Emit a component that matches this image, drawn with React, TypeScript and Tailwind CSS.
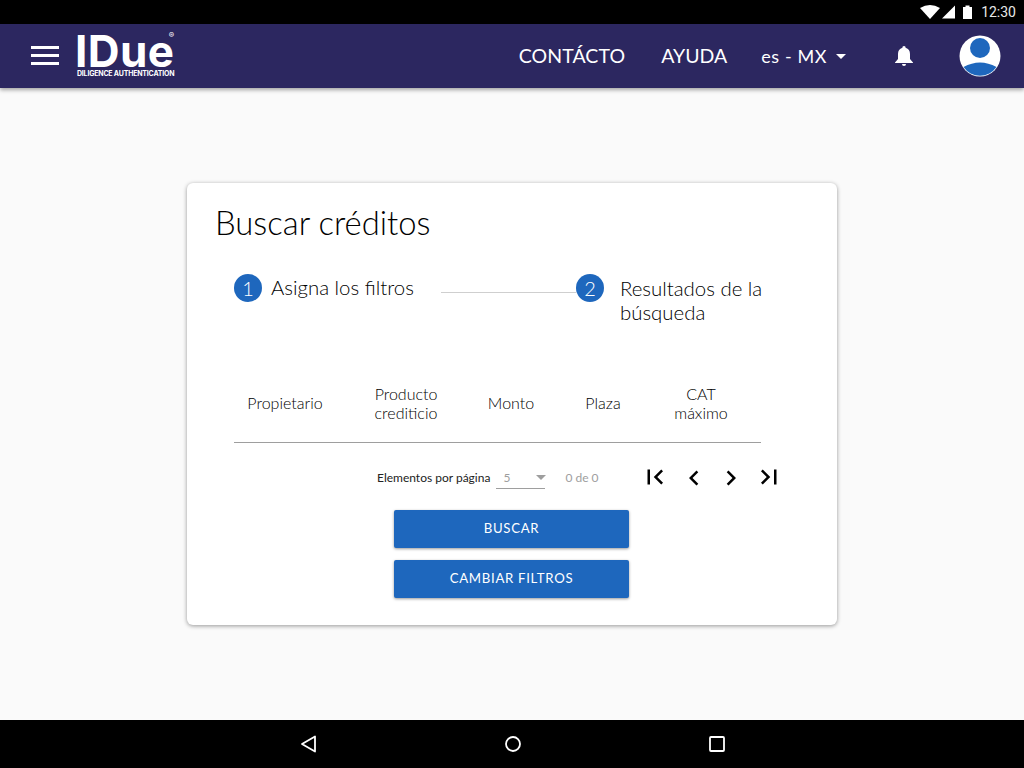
const font = { fontFamily: "Lato, sans-serif" };

function StatusBar() {
  return (
    <div className="h-6 bg-black flex items-center justify-end pr-[8px] shrink-0">
      <svg width="20" height="14" viewBox="0 0 20 14" className="mr-[1px]">
        <path d="M0 3 Q10 -3 20 3 L10 14 Z" fill="#fff" />
      </svg>
      <svg width="14" height="14" viewBox="0 0 14 14" className="mr-[8px]">
        <path d="M14 0.5 V13.5 H1 Z" fill="#fff" />
      </svg>
      <svg width="9" height="14" viewBox="0 0 9 14" className="mr-[9px]">
        <path d="M0 2 H2.5 V0.5 H6.5 V2 H9 V14 H0 Z" fill="#fff" />
      </svg>
      <span className="text-[14px] text-[#e8e8e8] font-['Roboto',sans-serif]">12:30</span>
    </div>
  );
}

function Header() {
  return (
    <header className="relative z-10 h-16 bg-[#2c2760] flex items-center text-white shadow-[0_2px_4px_rgba(0,0,0,0.35)] shrink-0">
      <div className="ml-[31px] w-7 flex flex-col gap-[5px] mt-[-1px]">
        <div className="h-[3px] bg-white" />
        <div className="h-[3px] bg-white" />
        <div className="h-[3px] bg-white" />
      </div>
      <div className="ml-[16px] w-[102px] relative h-[44px] font-['Inter',sans-serif]">
        <div className="text-[44px] leading-[38px] font-bold mt-[-2px] tracking-[0.4px]">IDue</div>
        <div className="absolute left-[2px] top-[37px] text-[7px] leading-[6px] font-bold whitespace-nowrap tracking-[-0.2px]">
          DILIGENCE AUTHENTICATION
        </div>
        <div className="absolute right-[3px] top-[-2px] text-[8px] leading-[6px]">®</div>
      </div>
      <nav className="ml-auto flex items-center" style={font}>
        <span className="text-[19.5px] tracking-[0.1px]">CONTÁCTO</span>
        <span className="ml-[36px] text-[19.5px]">AYUDA</span>
        <span className="ml-[34px] text-[18px] tracking-[0.6px]">es - MX</span>
        <div className="ml-[9px] w-0 h-0 border-x-[5px] border-x-transparent border-t-[5px] border-t-white" />
      </nav>
      <svg width="20" height="22" viewBox="0 0 20 22" className="ml-[48px]">
        <path d="M10 1 a1.6 1.6 0 0 1 1.6 1.8 C14.6 3.6 16 6 16 9 V14 L19 17.5 V18 H1 V17.5 L4 14 V9 C4 6 5.4 3.6 8.4 2.8 A1.6 1.6 0 0 1 10 1 Z M8 19 H12 A2 2 0 0 1 8 19 Z" fill="#fff" />
      </svg>
      <svg width="42" height="42" viewBox="0 0 42 42" className="ml-[45px] mr-[23px]">
        <circle cx="21" cy="21" r="20.5" fill="#fff" />
        <circle cx="21" cy="13" r="10" fill="#1e67bd" />
        <path d="M4.5 32 Q21 23 37.5 32 A20 20 0 0 1 4.5 32 Z" fill="#1e67bd" />
      </svg>
    </header>
  );
}

function StepDot({ n }: { n: number }) {
  return (
    <div className="w-7 h-7 rounded-full bg-[#1e67bd] text-white flex items-center justify-center text-[20px] font-light shrink-0">
      {n}
    </div>
  );
}

function Stepper() {
  return (
    <div className="flex items-start ml-[47px] mt-[31px] h-[88px] text-black font-light">
      <StepDot n={1} />
      <span className="ml-[9px] text-[20.4px] leading-[28px] w-[170px] mt-[-1px]">Asigna los filtros</span>
      <div className="h-px w-[135px] bg-[#cfcfcf] mt-[18px]" />
      <StepDot n={2} />
      <span className="ml-[16px] text-[20.4px] leading-[24px] w-[160px] mt-[2px]">Resultados de la búsqueda</span>
    </div>
  );
}

function Table() {
  const cols = [
    { label: "Propietario", w: "w-[102px]" },
    { label: "Producto crediticio", w: "w-[140px]" },
    { label: "Monto", w: "w-[70px]" },
    { label: "Plaza", w: "w-[114px]" },
    { label: "CAT máximo", w: "w-[82px]" },
  ];
  return (
    <div className="ml-[47px] w-[527px] h-[70px] border-b border-[#9e9e9e] flex items-center mt-[11px] text-[16px] font-light leading-[19px] text-black text-center">
      {cols.map((c) => (
        <div key={c.label} className={`${c.w} mt-[-10px] px-2`}>
          {c.label}
        </div>
      ))}
    </div>
  );
}

function PagerIcon({ d, className }: { d: string; className?: string }) {
  return (
    <svg width="30" height="30" viewBox="0 0 24 24" fill="#000" className={className}>
      <path d={d} />
    </svg>
  );
}

function Pager() {
  return (
    <div className="flex items-center ml-[190px] mt-[23px] h-6">
      <span className="text-[12px] text-[#222]">Elementos por página</span>
      <div className="ml-[6px] w-[49px] h-[22px] border-b border-[#9e9e9e] flex items-center justify-between pl-[7px] text-[12px] text-[#9e9e9e]">
        <span>5</span>
        <div className="w-0 h-0 mr-[-1px] border-x-[5px] border-x-transparent border-t-[5px] border-t-[#9e9e9e]" />
      </div>
      <span className="ml-[20px] text-[12px] text-[#9e9e9e]">0 de 0</span>
      <div className="ml-[41px] flex items-center">
        <PagerIcon d="M18.41 16.59L13.82 12l4.59-4.59L17 6l-6 6 6 6zM6 6h2v12H6z" className="mt-[-3px]" />
        <PagerIcon d="M15.41 16.59L10.83 12l4.58-4.59L14 6l-6 6 6 6 1.41-1.41z" className="ml-[9px]" />
        <PagerIcon d="M8.59 16.59L13.17 12 8.59 7.41 10 6l6 6-6 6-1.41-1.41z" className="ml-[7px]" />
        <PagerIcon d="M5.59 7.41L10.18 12l-4.59 4.59L7 18l6-6-6-6zM16 6h2v12h-2z" className="ml-[8px] mt-[-3px]" />
      </div>
    </div>
  );
}

function ActionButton({ label }: { label: string }) {
  return (
    <button
      type="button"
      className="w-[235px] h-[38px] rounded-[2px] bg-[#1e67bd] text-white text-[13.2px] tracking-[0.7px] shadow-[0_1px_3px_rgba(0,0,0,0.4)]"
    >
      {label}
    </button>
  );
}

function NavBar() {
  return (
    <div className="h-12 bg-black flex items-center shrink-0">
      <svg width="18" height="18" viewBox="0 0 18 18" className="ml-[300px]">
        <path d="M15 1.5 V16.5 L2 9 Z" fill="none" stroke="#fff" strokeWidth="1.8" strokeLinejoin="round" />
      </svg>
      <svg width="18" height="18" viewBox="0 0 18 18" className="ml-[186px]">
        <circle cx="9" cy="9" r="7" fill="none" stroke="#fff" strokeWidth="1.8" />
      </svg>
      <svg width="18" height="18" viewBox="0 0 18 18" className="ml-[186px]">
        <rect x="2" y="2" width="14" height="14" rx="1" fill="none" stroke="#fff" strokeWidth="1.8" />
      </svg>
    </div>
  );
}

export default function App() {
  return (
    <div className="w-[1024px] h-[768px] flex flex-col bg-[#fafafa] overflow-hidden" style={font}>
      <StatusBar />
      <Header />
      <main className="flex-1 pt-[95px] pl-[187px]">
        <div className="w-[650px] h-[442px] bg-white rounded-[6px] shadow-[0_1px_4px_rgba(0,0,0,0.4)] flex flex-col">
          <h1 className="ml-[28px] mt-[20px] text-[32.8px] leading-[40px] text-black font-light">Buscar créditos</h1>
          <Stepper />
          <Table />
          <Pager />
          <div className="flex flex-col gap-3 items-start ml-[207px] mt-[20px]">
            <ActionButton label="BUSCAR" />
            <ActionButton label="CAMBIAR FILTROS" />
          </div>
        </div>
      </main>
      <NavBar />
    </div>
  );
}
